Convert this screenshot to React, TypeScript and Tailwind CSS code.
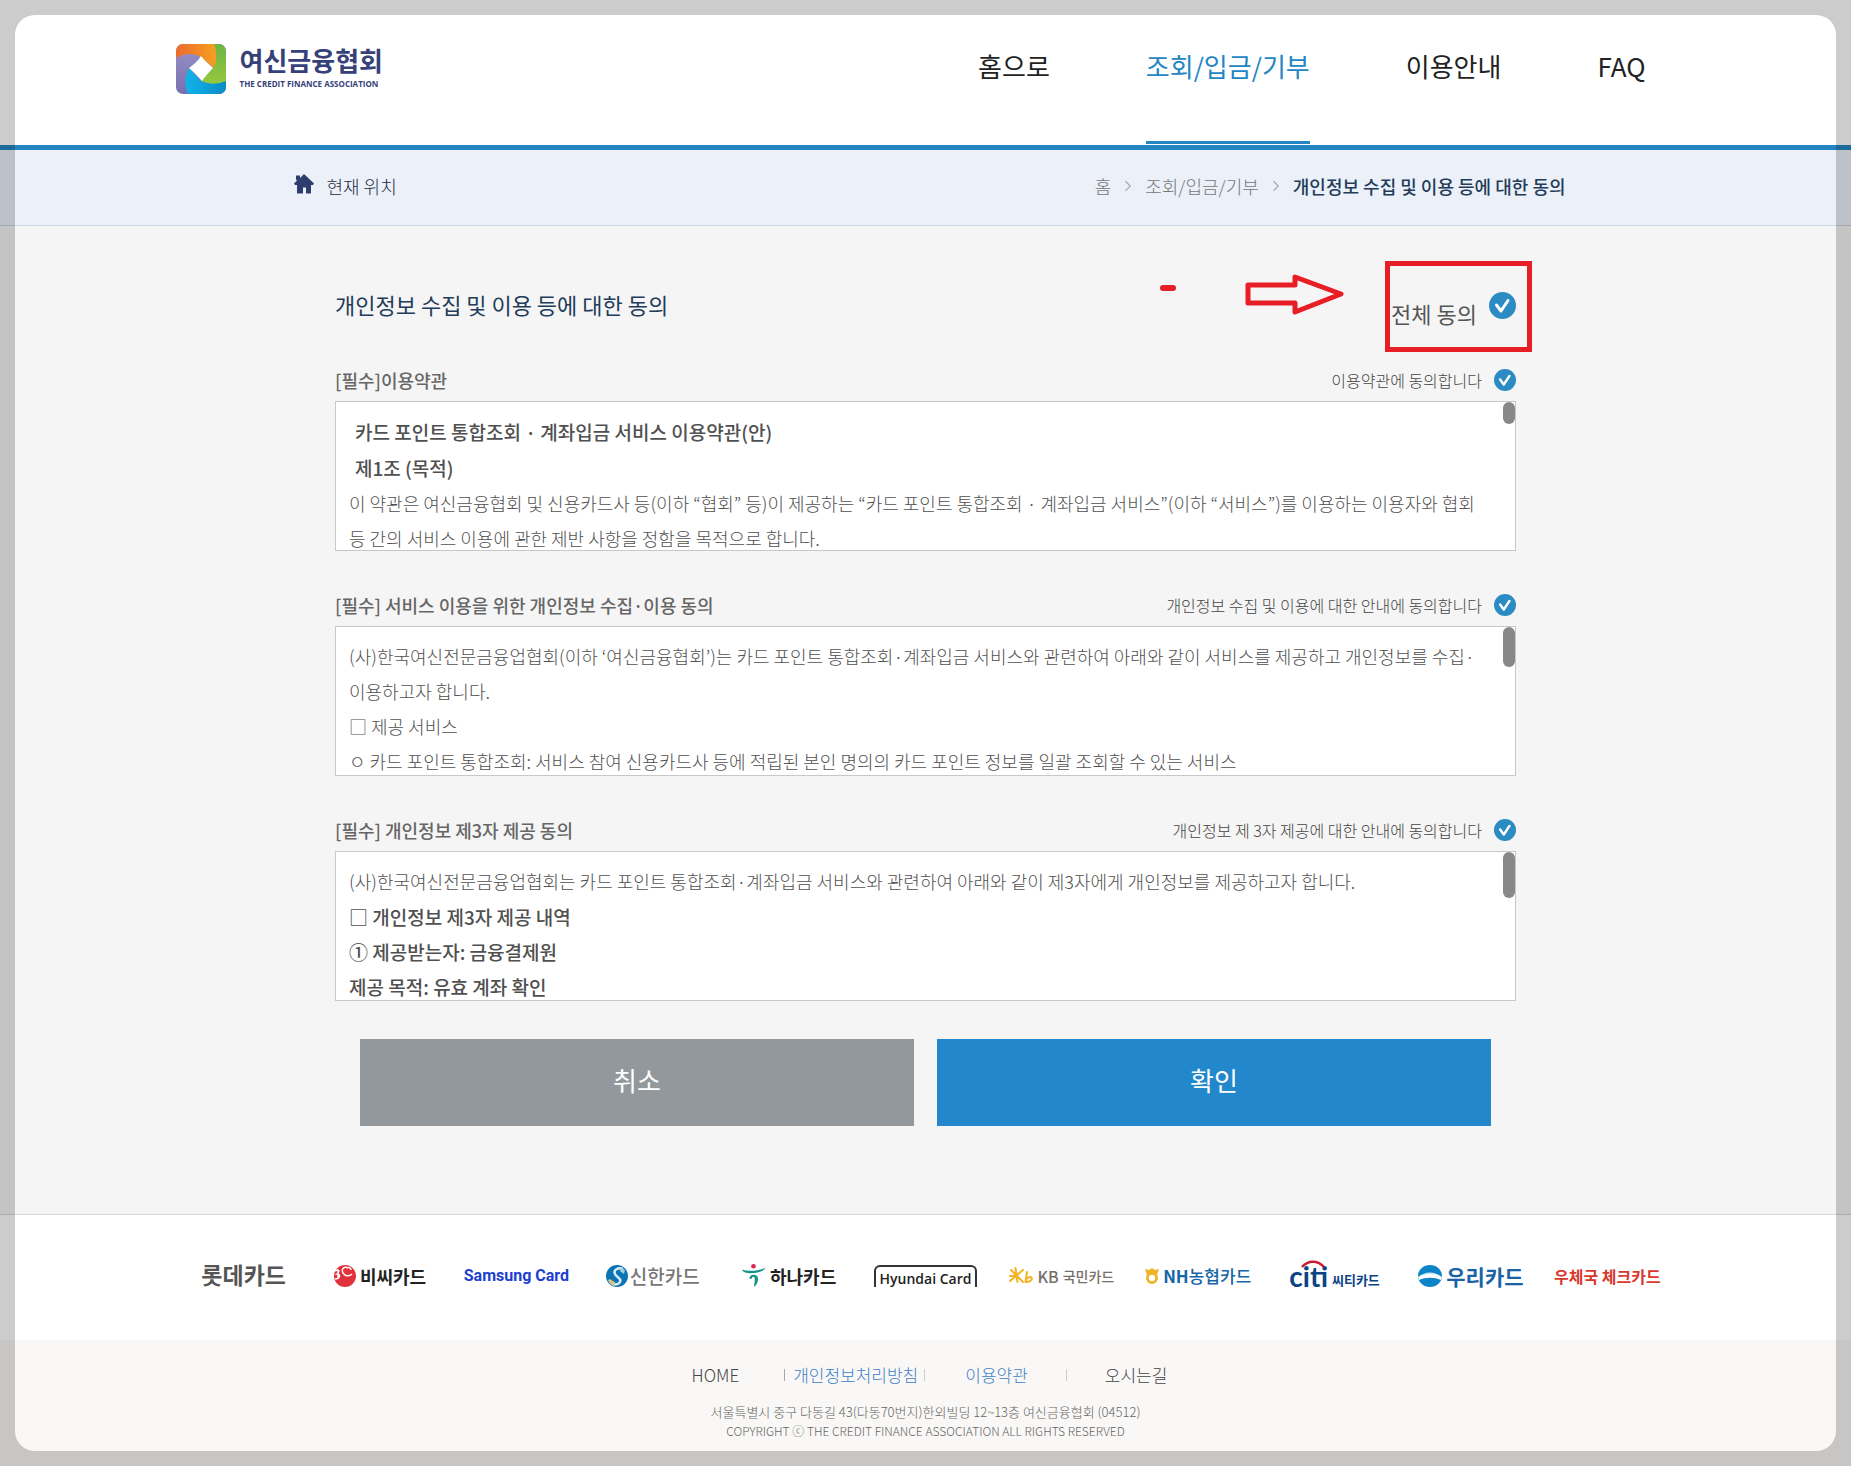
import type { ReactNode } from "react";
import { ChevronRight } from "lucide-react";

const NAV = [
    { label: "홈으로", active: false },
    { label: "조회/입금/기부", active: true },
    { label: "이용안내", active: false },
    { label: "FAQ", active: false },
];

function AssociationMark() {
    return (
        <svg viewBox="0 0 50 50" className="w-[50px] h-[50px] shrink-0" aria-hidden="true">
            <defs>
                <clipPath id="mark"><rect width="50" height="50" rx="7" /></clipPath>
                <linearGradient id="orange" x1="0" x2="1"><stop offset="0" stopColor="#ee6a2c" /><stop offset="1" stopColor="#f5a021" /></linearGradient>
                <linearGradient id="green" x1="0" x2="0" y1="0" y2="1"><stop offset="0" stopColor="#6db445" /><stop offset="1" stopColor="#96c93d" /></linearGradient>
                <linearGradient id="blue" x1="0" x2="1"><stop offset="0" stopColor="#10b4ea" /><stop offset="1" stopColor="#0c8bc6" /></linearGradient>
                <linearGradient id="purple" x1="0" x2="0" y1="0" y2="1"><stop offset="0" stopColor="#9a93c8" /><stop offset="1" stopColor="#766fae" /></linearGradient>
            </defs>
            <g clipPath="url(#mark)">
                <rect width="50" height="50" fill="url(#purple)" />
                <path d="M0 0H40V26L25 13C17 9 8 9 0 14Z" fill="url(#orange)" />
                <path d="M38 0H50V39C42 42 32 40 25 37L37 24C42 17 41 8 38 0Z" fill="url(#green)" />
                <path d="M50 37V50H12C8 41 9 32 13 24L25 37C33 41 43 40 50 37Z" fill="url(#blue)" />
                <path d="M25 12C29 17 33 20 37 24C33 28 29 33 26 37C22 33 18 28 13 24C18 20 22 17 25 12Z" fill="#fff" />
            </g>
        </svg>
    );
}

function HomeIcon() {
    return (
        <svg viewBox="0 0 20 20" className="w-5 h-5 mb-1" fill="#2c3e6e" aria-hidden="true">
            <path d="M2 1.500h4v2.500l4-4 10 9.500-1 1.500h-2v8.500h-5v-6H9v6H3v-8.500H1l-1-1.500 3-3-1-1z" />
        </svg>
    );
}

function RoundCheck({ id, large }: { id: string; large?: boolean }) {
    return (
        <span className={large ? "relative block w-[27px] h-[27px]" : "relative block w-[22px] h-[22px]"}>
            <input id={id} type="checkbox" defaultChecked className="block w-full h-full appearance-none rounded-full bg-[#2b8cc4]" />
            <svg viewBox="0 0 27 27" className="absolute inset-0 pointer-events-none" fill="none" stroke="#fff" strokeWidth="3" strokeLinecap="round" strokeLinejoin="round">
                <path d="M7.500 13L12 19L19 8.500" />
            </svg>
        </span>
    );
}

type TermsProps = { id: string; title: string; agree: string; thumb: string; children: ReactNode };

function Terms({ id, title, agree, thumb, children }: TermsProps) {
    return (
        <section>
            <div className="flex items-center justify-between h-7 mb-[7px]">
                <h3 className="text-lg font-medium text-[#666]">{title}</h3>
                <label htmlFor={id} className="flex items-center gap-3 text-base font-light text-[#444]">
                    {agree}
                    <RoundCheck id={id} />
                </label>
            </div>
            <div className="relative h-[150px] overflow-hidden bg-white border border-[#c8c8c8] pt-3 pl-[13px] pr-6 text-lg leading-[35px] font-light text-[#505050]">
                {children}
                <span className={`absolute top-0 right-0 w-3 rounded-full bg-[#888] ${thumb}`} />
            </div>
        </section>
    );
}

function CardLogos() {
    return (
        <ul className="mx-auto w-full max-w-[1500px] h-[125px] pb-1 grid grid-cols-11 items-center justify-items-center whitespace-nowrap leading-6 font-bold">
            <li className="pb-1 text-[23px] text-[#555]">롯데카드</li>
            <li className="flex items-center gap-1 text-lg text-[#222]">
                <svg viewBox="0 0 22 22" className="w-[22px] h-[22px]" aria-hidden="true">
                    <circle cx="11" cy="11" r="11" fill="#e0323c" />
                    <path d="M1 6c4-3 5 1 2 3 4 0 3 5-2 5M4 5v8M14 3c-4-2-7 1-5 5 2 3 6 4 9 1M14 3c1-1 3 0 3 2" fill="none" stroke="#fff" strokeWidth="1.5" />
                </svg>
                비씨카드
            </li>
            <li className="text-base font-['Roboto'] text-[#1c3fd0]">Samsung Card</li>
            <li className="flex items-center gap-0.5 text-[19px] font-medium text-[#777]">
                <svg viewBox="0 0 22 22" className="w-[22px] h-[22px]" aria-hidden="true">
                    <circle cx="11" cy="11" r="11" fill="#0c74b4" />
                    <path d="M17 4C12 2 7 5 9 9s7 4 5 8c-1 2-4 3-7 2" fill="none" stroke="#d5edf5" strokeWidth="2.5" />
                    <path d="M2 15c3-2 3 1 7 2l-1 4c-3-1-5-3-6-6z" fill="#d8c68c" />
                    <path d="M15 3l4 2-1 4-4-3z" fill="#9fd1df" />
                </svg>
                신한카드
            </li>
            <li className="flex items-center gap-1 text-lg text-[#222]">
                <svg viewBox="0 0 24 23" className="w-6 h-[23px]" aria-hidden="true">
                    <circle cx="11.5" cy="2.300" r="2.300" fill="#d9274e" />
                    <path d="M0 5.500C5 7.500 16 7.500 24 3.500C21 7.500 17 8.500 12 9C6 9.500 1 9 0 5.500Z" fill="#159389" />
                    <path d="M7.500 14.500C7 10 16 9 16 14.500C16 18.500 14.500 21 12 23C12 19 13.500 16 12.500 13.500C11.500 12 10 13 9.500 15Z" fill="#159389" />
                </svg>
                하나카드
            </li>
            <li className="h-[22px] w-[103px] rounded-t-md border-2 border-b-0 border-[#333] text-center font-['Open_Sans'] font-semibold text-sm leading-6 text-[#222]">
                Hyundai Card
            </li>
            <li className="flex items-center gap-1 text-base font-medium text-[#777069]">
                <svg viewBox="0 0 24 18" className="w-6 h-[18px]" fill="none" stroke="#f5b324" strokeWidth="2" strokeLinecap="round" aria-hidden="true">
                    <path d="M6.500 1L8.500 15M2 3L14 15M1 14L14 3M1 9L8 9M18 5L16.500 15C20 15.500 24 13 22.500 10.500C20.500 9 17.500 11 16.500 14" />
                </svg>
                <span>KB</span>
                <span className="text-sm">국민카드</span>
            </li>
            <li className="flex items-center gap-1 text-[17px] text-[#1466a8]">
                <svg viewBox="0 0 14 16" className="w-[14px] h-4" aria-hidden="true">
                    <circle cx="7" cy="10" r="4.600" fill="none" stroke="#f0b428" strokeWidth="2.800" />
                    <path d="M0 1l4 1 3-2 3 2 4-1-2 6H2z" fill="#f0b428" />
                </svg>
                <span>NH<span className="font-medium">농협카드</span></span>
            </li>
            <li className="flex items-end gap-1 text-[#0c4384]">
                <span className="relative font-['Lato'] text-[28px] leading-6">
                    citi
                    <svg viewBox="0 0 24 8" className="absolute left-3 -top-1 w-6 h-2" aria-hidden="true">
                        <path d="M1 7C7 0 17 0 23 7" fill="none" stroke="#c81e32" strokeWidth="2.500" />
                    </svg>
                </span>
                <span className="text-[13px] leading-4">씨티카드</span>
            </li>
            <li className="flex items-center gap-1 text-[21px] text-[#1a62a6]">
                <svg viewBox="0 0 24 22" className="w-6 h-[22px]" aria-hidden="true">
                    <ellipse cx="12" cy="11" rx="12" ry="11" fill="#0c84c8" />
                    <path d="M0 12C7 6 17 6 24 12C17 9 7 9 0 12Z" fill="#bfe6f7" />
                    <path d="M0 12C7 8 17 8 24 12L23 15C16 12 8 12 1 15Z" fill="#fff" />
                </svg>
                우리카드
            </li>
            <li className="text-base text-[#d8382e]">우체국 체크카드</li>
        </ul>
    );
}

export default function App() {
    return (
        <div className="relative min-h-screen overflow-hidden bg-[#f5f5f5] font-['Noto_Sans_CJK_KR',sans-serif]">
            <header className="h-[150px] bg-white border-b-[5px] border-[#2386c3]">
                <div className="mx-auto w-full max-w-[1500px] h-full pr-[30px] flex justify-between">
                    <a href="#" className="flex items-start gap-[14px] pt-11 text-[#36417a] font-bold">
                        <AssociationMark />
                        <span className="block">
                            <span className="block text-[26px] leading-8">여신금융협회</span>
                            <span className="block mt-0.5 text-[8px] leading-3 font-['Open_Sans']">THE CREDIT FINANCE ASSOCIATION</span>
                        </span>
                    </a>
                    <nav className="flex gap-24 pb-px text-[26px] leading-10 text-[#222]">
                        {NAV.map((item) => (
                            <a
                                key={item.label}
                                href="#"
                                className={item.active ? "pt-[46px] border-b-[3px] border-[#2386c3] text-[#2386c3]" : "pt-[46px]"}
                            >
                                {item.label}
                            </a>
                        ))}
                    </nav>
                </div>
            </header>

            {/* Breadcrumb */}
            <div className="h-[76px] bg-[#ebf0f9] border-b border-[#ccd8df]">
                <div className="mx-auto w-full max-w-[1280px] h-full pl-2 pb-1 flex items-center justify-between text-lg font-light">
                    <p className="flex items-center gap-[13px] text-[#1c2e40]">
                        <HomeIcon />
                        현재 위치
                    </p>
                    <nav className="flex items-center gap-2 text-[#777]">
                        <a href="#">홈</a>
                        <ChevronRight size={18} strokeWidth={1.5} className="text-[#aaa]" />
                        <a href="#">조회/입금/기부</a>
                        <ChevronRight size={18} strokeWidth={1.5} className="text-[#aaa]" />
                        <span className="font-medium text-[#223c5a]">개인정보 수집 및 이용 등에 대한 동의</span>
                    </nav>
                </div>
            </div>

            <main className="mx-auto w-full max-w-[1181px] pt-[54px] pb-[88px]">
                <div className="relative flex items-center justify-between h-[50px] mb-9">
                    <h2 className="pb-0.5 text-[22px] text-[#223c5a]">개인정보 수집 및 이용 등에 대한 동의</h2>
                    <label htmlFor="agree-all" className="flex items-center gap-3 text-[22px] text-[#555]">
                        <span className="pt-4">전체 동의</span>
                        <RoundCheck id="agree-all" large />
                    </label>
                    {/* Red marker notes */}
                    <div className="absolute -top-[19px] -right-4 w-[147px] h-[91px] border-[5px] border-[#e81e26] pointer-events-none" />
                    <svg viewBox="0 0 184 42" className="absolute -top-[7px] right-[172px] w-[184px] h-[42px] pointer-events-none" fill="none" stroke="#e81e26" strokeLinejoin="round" aria-hidden="true">
                        <path d="M3 15H13" strokeWidth="6" strokeLinecap="round" />
                        <path d="M88 12H135V4L181 21L135 39V30H88Z" strokeWidth="5" />
                    </svg>
                </div>

                <div className="flex flex-col gap-10">
                    <Terms id="agree-terms" title="[필수]이용약관" agree="이용약관에 동의합니다" thumb="h-[22px]">
                        <h4 className="pl-1.5 text-[19px] leading-9 font-medium">카드 포인트 통합조회 · 계좌입금 서비스 이용약관(안)</h4>
                        <h4 className="pl-1.5 text-[19px] leading-9 font-medium">제1조 (목적)</h4>
                        <p>이 약관은 여신금융협회 및 신용카드사 등(이하 “협회” 등)이 제공하는 “카드 포인트 통합조회 · 계좌입금 서비스”(이하 “서비스”)를 이용하는 이용자와 협회 등 간의 서비스 이용에 관한 제반 사항을 정함을 목적으로 합니다.</p>
                    </Terms>
                    <Terms id="agree-privacy" title="[필수] 서비스 이용을 위한 개인정보 수집·이용 동의" agree="개인정보 수집 및 이용에 대한 안내에 동의합니다" thumb="h-10">
                        <p>(사)한국여신전문금융업협회(이하 ‘여신금융협회’)는 카드 포인트 통합조회·계좌입금 서비스와 관련하여 아래와 같이 서비스를 제공하고 개인정보를 수집·이용하고자 합니다.</p>
                        <p>□ 제공 서비스</p>
                        <p>ㅇ 카드 포인트 통합조회: 서비스 참여 신용카드사 등에 적립된 본인 명의의 카드 포인트 정보를 일괄 조회할 수 있는 서비스</p>
                    </Terms>
                    <Terms id="agree-third" title="[필수] 개인정보 제3자 제공 동의" agree="개인정보 제 3자 제공에 대한 안내에 동의합니다" thumb="h-[46px]">
                        <p>(사)한국여신전문금융업협회는 카드 포인트 통합조회·계좌입금 서비스와 관련하여 아래와 같이 제3자에게 개인정보를 제공하고자 합니다.</p>
                        <p className="text-[19px] font-medium">□ 개인정보 제3자 제공 내역</p>
                        <p className="text-[19px] font-medium">① 제공받는자: 금융결제원</p>
                        <p className="text-[19px] font-medium">제공 목적: 유효 계좌 확인</p>
                    </Terms>
                </div>

                <div className="mt-[38px] px-[25px] grid grid-cols-2 gap-[23px] text-[26px] text-white">
                    <button type="button" className="h-[87px] pb-1.5 bg-[#92989b]">취소</button>
                    <button type="button" className="h-[87px] pb-1.5 bg-[#2288cb]">확인</button>
                </div>
            </main>

            <div className="bg-white border-t border-[#d8d8d8]">
                <CardLogos />
            </div>

            <footer className="h-[126px] pt-5 bg-[#f9f8f6] text-center font-light text-[#666]">
                <nav className="flex items-center justify-center h-[30px] pl-2 text-[17px] text-[#444]">
                    <a href="#">HOME</a>
                    <span className="ml-[45px] mr-2 w-px h-3 bg-[#aaa]" />
                    <a href="#" className="text-[#3f80c8]">개인정보처리방침</a>
                    <span className="ml-1.5 mr-10 w-px h-3 bg-[#ccc]" />
                    <a href="#" className="text-[#3f80c8]">이용약관</a>
                    <span className="mx-[38px] w-px h-3 bg-[#ccc]" />
                    <a href="#">오시는길</a>
                </nav>
                <p className="mt-3 text-[13px] leading-[19px]">서울특별시 중구 다동길 43(다동70번지)한외빌딩 12~13층 여신금융협회 (04512)</p>
                <p className="text-xs leading-[19px]">COPYRIGHT ⓒ THE CREDIT FINANCE ASSOCIATION ALL RIGHTS RESERVED</p>
            </footer>

            {/* Dimmed frame around the page */}
            <div className="absolute inset-[15px] rounded-[20px] shadow-[0_0_0_40px_rgba(0,0,0,0.2)] pointer-events-none" />
        </div>
    );
}
